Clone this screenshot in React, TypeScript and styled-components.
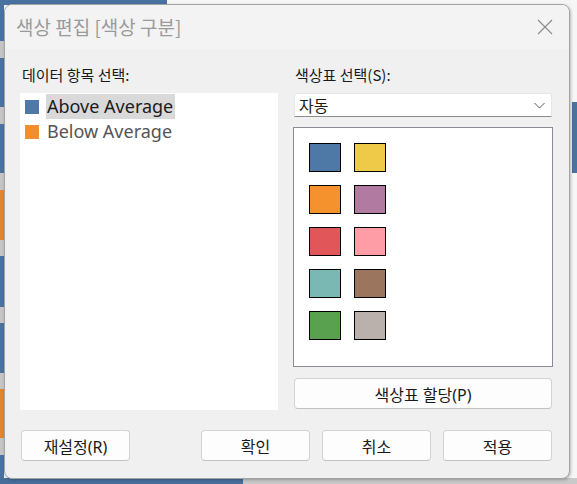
import React from "react";
import styled, { createGlobalStyle } from "styled-components";

const Global = createGlobalStyle`
  html, body { margin: 0; padding: 0; }
  body { font-family: "Noto Sans", "Noto Sans CJK KR", sans-serif; }
`;

const Page = styled.div`
  width: 577px;
  height: 484px;
  box-sizing: border-box;
  padding: 4px 7px 5px 4px;
  background:
    linear-gradient(90deg, #4a72a0 0 167px, transparent 167px) left top / 100% 5px no-repeat,
    linear-gradient(90deg, #476e9b 0 243px, #c9c9c9 243px) left bottom / 100% 6px no-repeat,
    linear-gradient(180deg,
      #4a72a0 0 41px, #c4c4c4 41px 58px,
      #4a72a0 58px 107px, #c4c4c4 107px 124px,
      #4a72a0 124px 173px, #c4c4c4 173px 190px,
      #e3852b 190px 240px, #c4c4c4 240px 256px,
      #4a72a0 256px 307px, #c4c4c4 307px 323px,
      #4a72a0 323px 373px, #c4c4c4 373px 389px,
      #e3852b 389px 438px, #c4c4c4 438px 455px,
      #4a72a0 455px 484px) left top / 4px 100% no-repeat,
    linear-gradient(180deg, transparent 0 102px, #4a72a0 102px 173px, transparent 173px) right top / 5px 100% no-repeat,
    #f6f6f6;
`;

const Dialog = styled.div`
  height: 100%;
  box-sizing: border-box;
  border: 1px solid #a3a3a3;
  border-radius: 8px;
  background: #f0f0f0;
  box-shadow: 1px 1px 3px rgba(0, 0, 0, 0.25);
  display: flex;
  flex-direction: column;
  overflow: hidden;
`;

const TitleBar = styled.div`
  height: 44px;
  flex: none;
  background: #f3f3f3;
  display: flex;
  align-items: center;
  justify-content: space-between;
  padding: 0 16px 0 11px;
`;

const Title = styled.div`
  font-family: "Noto Sans CJK KR", sans-serif;
  font-size: 19px;
  color: #9a9a9a;
  line-height: 22px;
`;

const CloseIcon = styled.svg`
  width: 16px;
  height: 16px;
  display: block;
`;

const Body = styled.div`
  flex: 1;
  display: grid;
  grid-template-columns: 258px 260px;
  column-gap: 15px;
  padding: 16px 16px 0 15px;
`;

const Column = styled.div`
  display: flex;
  flex-direction: column;
`;

const Label = styled.div`
  font-family: "Noto Sans CJK KR", sans-serif;
  font-size: 15px;
  line-height: 20px;
  color: #1a1a1a;
  height: 20px;
  margin: 0 0 8px 2px;
`;

const ListBox = styled.div`
  height: 317px;
  background: #ffffff;
  display: flex;
  flex-direction: column;
  padding: 1px 0 0 5px;
  box-sizing: border-box;
`;

const ListRow = styled.div`
  display: flex;
  align-items: center;
  height: 25px;
  gap: 7px;
`;

const Chip = styled.span<{ $color: string }>`
  width: 14px;
  height: 14px;
  background: ${(p) => p.$color};
  flex: none;
`;

const ItemText = styled.span<{ $selected?: boolean }>`
  font-family: "Noto Sans", sans-serif;
  font-size: 18px;
  line-height: 25px;
  padding: 0 2px 0 1px;
  color: ${(p) => (p.$selected ? "#1b1b1b" : "#555555")};
  background: ${(p) => (p.$selected ? "#d9d9d9" : "transparent")};
`;

const Select = styled.div`
  height: 24px;
  box-sizing: border-box;
  margin-left: 1px;
  width: 258px;
  background: #ffffff;
  border: 1px solid #e6e6e6;
  border-bottom: 1px solid #8d8d8d;
  border-radius: 3px 3px 0 0;
  display: flex;
  align-items: center;
  justify-content: space-between;
  padding: 0 6px 0 4px;
`;

const SelectText = styled.span`
  font-family: "Noto Sans CJK KR", sans-serif;
  font-size: 16px;
  color: #1a1a1a;
  line-height: 20px;
`;

const Chevron = styled.svg`
  width: 11px;
  height: 7px;
  display: block;
`;

const Palette = styled.div`
  margin-top: 10px;
  height: 240px;
  box-sizing: border-box;
  background: #ffffff;
  border: 1px solid #8b8b95;
  display: grid;
  grid-template-columns: 32px 32px;
  grid-auto-rows: 29px;
  column-gap: 13px;
  row-gap: 13px;
  padding: 15px 0 0 15px;
  align-content: start;
`;

const Swatch = styled.div<{ $color: string }>`
  box-sizing: border-box;
  border: 1px solid #000000;
  background: ${(p) => p.$color};
`;

const Button = styled.button<{ $width?: number }>`
  height: 31px;
  width: ${(p) => (p.$width ? `${p.$width}px` : "100%")};
  box-sizing: border-box;
  background: #fdfdfd;
  border: 1px solid #d3d3d3;
  border-bottom-color: #c2c2c2;
  border-radius: 4px;
  font-family: "Noto Sans", "Noto Sans CJK KR", sans-serif;
  font-size: 16px;
  color: #1a1a1a;
  padding: 0;
  display: flex;
  align-items: center;
  justify-content: center;
`;

const AssignButton = styled(Button)`
  margin-top: 11px;
  margin-left: 1px;
  width: 258px;
`;

const Footer = styled.div`
  display: flex;
  justify-content: space-between;
  padding: 20px 17px 17px 16px;
`;

const ButtonGroup = styled.div`
  display: flex;
  gap: 12px;
`;

const palette = [
  "#4e79a7",
  "#efca48",
  "#f5922e",
  "#b07aa1",
  "#e15759",
  "#ff9da7",
  "#7ab8b3",
  "#9c755f",
  "#59a14f",
  "#bab0ac",
];

export default function App() {
  return (
    <>
      <Global />
      <Page>
        <Dialog>
          <TitleBar>
            <Title>색상 편집 [색상 구분]</Title>
            <CloseIcon viewBox="0 0 16 16">
              <path d="M1 1 L15 15 M15 1 L1 15" stroke="#8a8a8a" strokeWidth="1.1" fill="none" />
            </CloseIcon>
          </TitleBar>
          <Body>
            <Column>
              <Label>데이터 항목 선택:</Label>
              <ListBox>
                <ListRow>
                  <Chip $color="#4e79a7" />
                  <ItemText $selected>Above Average</ItemText>
                </ListRow>
                <ListRow>
                  <Chip $color="#f28e2b" />
                  <ItemText>Below Average</ItemText>
                </ListRow>
              </ListBox>
            </Column>
            <Column>
              <Label>색상표 선택(S):</Label>
              <Select>
                <SelectText>자동</SelectText>
                <Chevron viewBox="0 0 11 7">
                  <path d="M0.5 1 L5.5 6 L10.5 1" stroke="#555" strokeWidth="1" fill="none" />
                </Chevron>
              </Select>
              <Palette>
                {palette.map((c) => (
                  <Swatch key={c} $color={c} />
                ))}
              </Palette>
              <AssignButton>색상표 할당(P)</AssignButton>
            </Column>
          </Body>
          <Footer>
            <Button $width={109}>재설정(R)</Button>
            <ButtonGroup>
              <Button $width={109}>확인</Button>
              <Button $width={109}>취소</Button>
              <Button $width={109}>적용</Button>
            </ButtonGroup>
          </Footer>
        </Dialog>
      </Page>
    </>
  );
}
